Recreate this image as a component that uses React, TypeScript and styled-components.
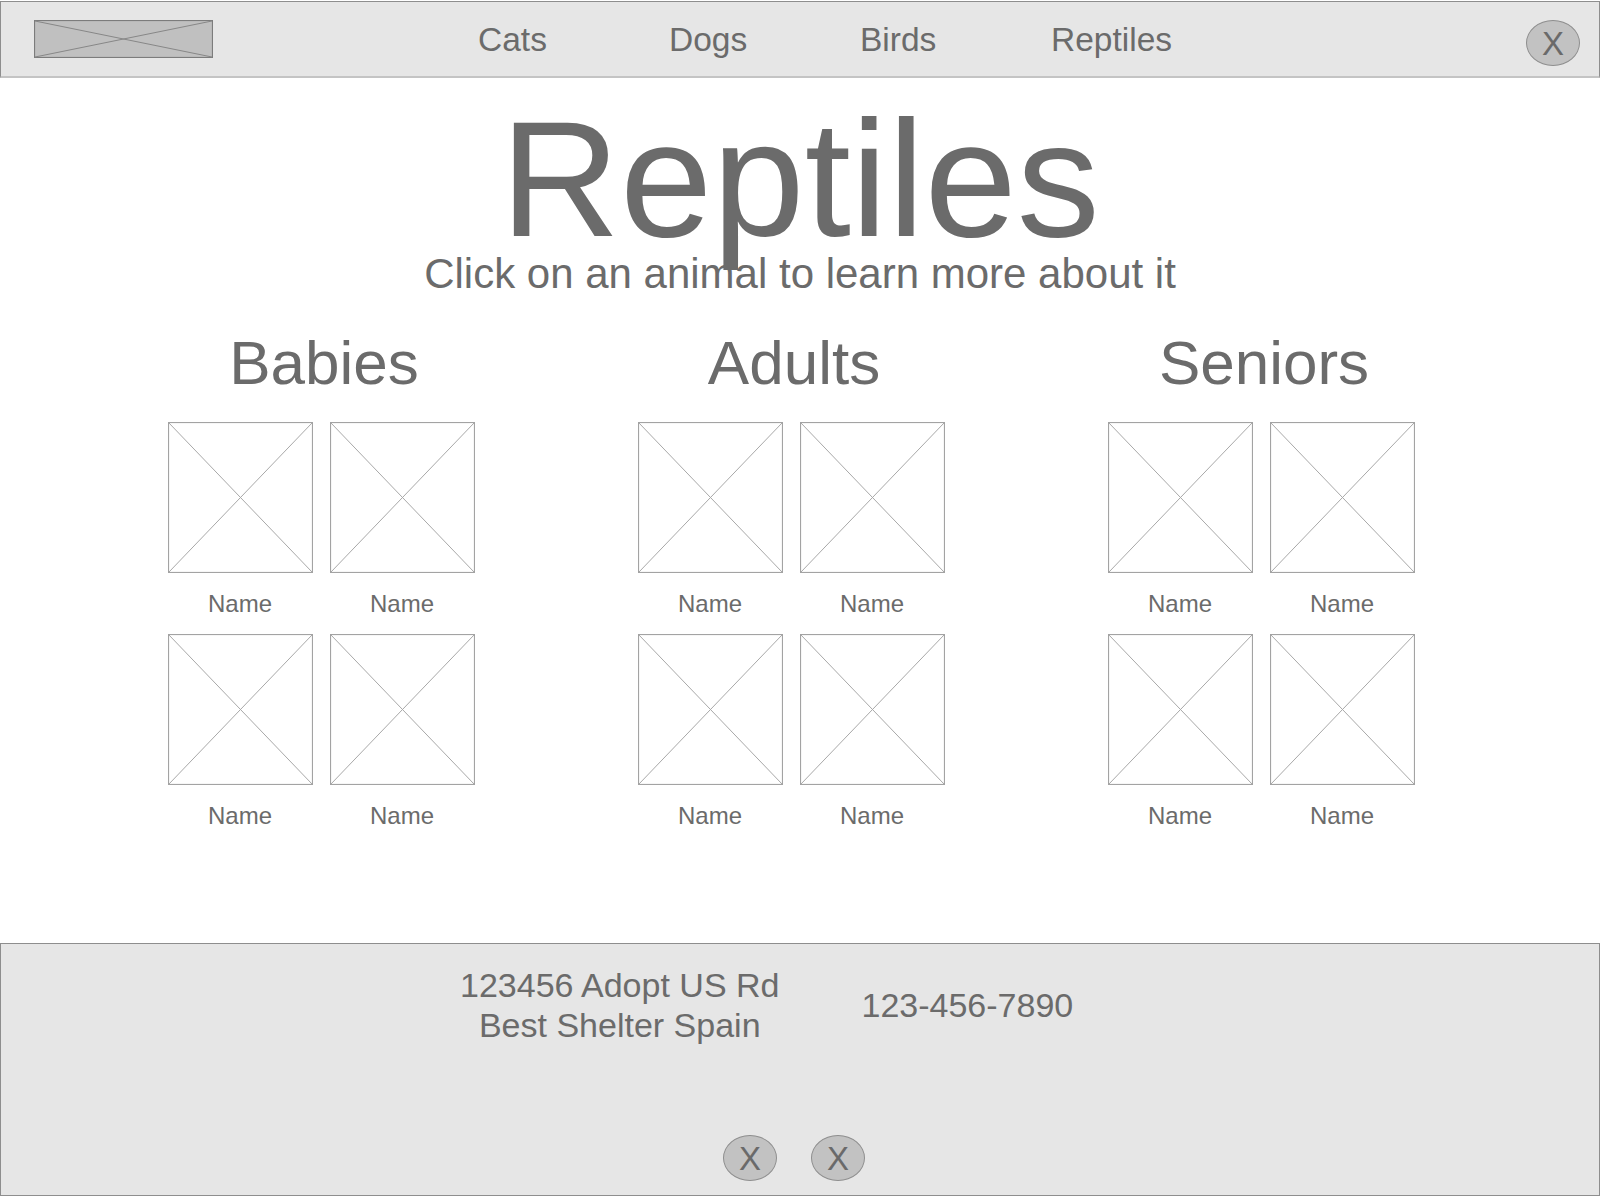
import React from "react";
import styled, { createGlobalStyle } from "styled-components";

const GlobalStyle = createGlobalStyle`
  html, body { margin: 0; padding: 0; background: #ffffff; }
  body { font-family: "Liberation Sans", Arial, Helvetica, sans-serif; color: #6b6b6b; }
  * { box-sizing: border-box; }
`;

const Page = styled.div`
  min-height: 100vh;
  display: flex;
  flex-direction: column;
`;

const Header = styled.header`
  margin-top: 1px;
  height: 77px;
  background: #e6e6e6;
  border: 1px solid #8e8e8e;
  border-bottom: 2px solid #c4c4c4;
  display: flex;
  align-items: flex-start;
  padding: 18px 19px 0 33px;
`;

const LogoBox = styled.div`
  width: 179px;
  height: 38px;
  display: block;
  svg { display: block; }
`;

const Nav = styled.nav`
  margin-left: 265px;
  display: grid;
  grid-template-columns: repeat(4, 191px);
`;

const NavLink = styled.a`
  font-size: 33.5px;
  line-height: 40px;
  color: #6b6b6b;
  text-decoration: none;
`;

const RoundButton = styled.button<{ $ml?: string }>`
  width: 54px;
  height: 46px;
  border-radius: 50%;
  background: #c2c2c2;
  border: 1px solid #8e8e8e;
  color: #6a6a6a;
  font-family: "Liberation Sans", Arial, sans-serif;
  font-size: 33px;
  line-height: 1;
  padding: 0;
  display: flex;
  align-items: center;
  justify-content: center;
  margin-left: ${(p) => p.$ml ?? "0"};
  cursor: pointer;
`;

const Main = styled.main`
  flex: 1;
  display: flex;
  flex-direction: column;
  align-items: stretch;
`;

const Title = styled.h1`
  margin: 18px 0 0 0;
  font-size: 166px;
  font-weight: 400;
  line-height: 166px;
  text-align: center;
  color: #6b6b6b;
`;

const Subtitle = styled.p`
  margin: -12px 0 0 0;
  font-size: 42px;
  line-height: 48px;
  text-align: center;
  color: #6b6b6b;
  position: relative;
`;

const Groups = styled.section`
  margin-top: 30px;
  padding-left: 86px;
  display: grid;
  grid-template-columns: repeat(3, 470px);
`;

const Group = styled.div`
  display: flex;
  flex-direction: column;
  align-items: center;
`;

const GroupTitle = styled.h2`
  margin: 0 0 24px 6px;
  font-size: 62px;
  font-weight: 400;
  line-height: 70px;
  color: #6b6b6b;
`;

const ThumbGrid = styled.div`
  display: grid;
  grid-template-columns: repeat(2, 145px);
  column-gap: 17px;
  row-gap: 16px;
`;

const Card = styled.div`
  display: flex;
  flex-direction: column;
  align-items: center;
  svg { display: block; }
`;

const CardName = styled.span`
  margin-top: 17px;
  font-size: 24px;
  line-height: 28px;
  color: #6b6b6b;
`;

const Footer = styled.footer`
  height: 253px;
  margin-bottom: 1px;
  background: #e6e6e6;
  border: 1px solid #8e8e8e;
  display: flex;
  flex-direction: column;
  padding: 21px 0 14px 0;
`;

const InfoRow = styled.div`
  display: flex;
  align-items: center;
  padding-left: 459px;
  gap: 82px;
`;

const Address = styled.div`
  font-size: 34px;
  line-height: 40px;
  text-align: center;
  color: #6b6b6b;
`;

const Phone = styled.div`
  font-size: 34px;
  line-height: 40px;
  color: #6b6b6b;
`;

const ButtonRow = styled.div`
  margin-top: auto;
  display: flex;
  gap: 34px;
  padding-left: 722px;
`;

const Placeholder: React.FC<{ w: number; h: number; fill: string; stroke: string; line: string }> = ({ w, h, fill, stroke, line }) => (
  <svg width={w} height={h} viewBox={`0 0 ${w} ${h}`}>
    <rect x={0.5} y={0.5} width={w - 1} height={h - 1} fill={fill} stroke={stroke} strokeWidth={1.2} />
    <line x1={1} y1={1} x2={w - 1} y2={h - 1} stroke={line} strokeWidth={1} />
    <line x1={w - 1} y1={1} x2={1} y2={h - 1} stroke={line} strokeWidth={1} />
  </svg>
);

const groups = ["Babies", "Adults", "Seniors"];

export default function App() {
  return (
    <Page>
      <GlobalStyle />
      <Header>
        <LogoBox>
          <Placeholder w={179} h={38} fill="#c0c0c0" stroke="#7c7c7c" line="#878787" />
        </LogoBox>
        <Nav>
          <NavLink href="#">Cats</NavLink>
          <NavLink href="#">Dogs</NavLink>
          <NavLink href="#">Birds</NavLink>
          <NavLink href="#">Reptiles</NavLink>
        </Nav>
        <RoundButton $ml="auto">X</RoundButton>
      </Header>
      <Main>
        <Title>Reptiles</Title>
        <Subtitle>Click on an animal to learn more about it</Subtitle>
        <Groups>
          {groups.map((g) => (
            <Group key={g}>
              <GroupTitle>{g}</GroupTitle>
              <ThumbGrid>
                {[0, 1, 2, 3].map((i) => (
                  <Card key={i}>
                    <Placeholder w={145} h={151} fill="#ffffff" stroke="#a3a3a3" line="#a8a8a8" />
                    <CardName>Name</CardName>
                  </Card>
                ))}
              </ThumbGrid>
            </Group>
          ))}
        </Groups>
      </Main>
      <Footer>
        <InfoRow>
          <Address>
            123456 Adopt US Rd
            <br />
            Best Shelter Spain
          </Address>
          <Phone>123-456-7890</Phone>
        </InfoRow>
        <ButtonRow>
          <RoundButton>X</RoundButton>
          <RoundButton>X</RoundButton>
        </ButtonRow>
      </Footer>
    </Page>
  );
}
